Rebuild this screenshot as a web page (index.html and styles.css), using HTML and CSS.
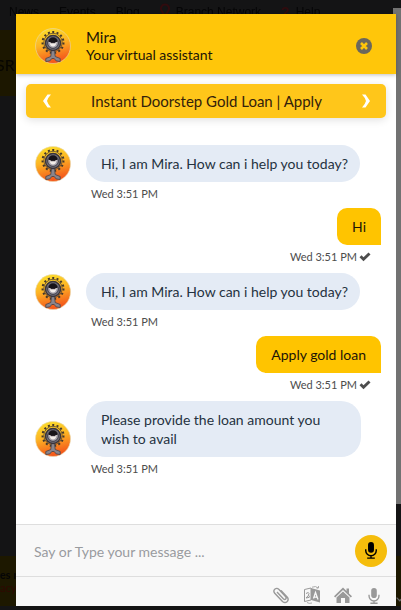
FILE: index.html
```html
<!DOCTYPE html>
<html lang="en">
<head>
<meta charset="utf-8">
<meta name="viewport" content="width=device-width, initial-scale=1">
<title>Mira</title>
<link rel="stylesheet" href="styles.css">
</head>
<body>
<svg class="defs" aria-hidden="true">
  <defs>
    <linearGradient id="sun" x1="0" y1="0" x2="0.25" y2="1">
      <stop offset="0" stop-color="#fbe42c"/><stop offset=".5" stop-color="#fdb524"/><stop offset="1" stop-color="#f45a1b"/>
    </linearGradient>
    <symbol id="mira" viewBox="0 0 36 36">
      <circle cx="18" cy="18" r="17.5" fill="url(#sun)" stroke="#e8d9b0" stroke-width=".6"/>
      <circle cx="18" cy="14.500" r="10.5" fill="none" stroke="#43372b" stroke-width="2" stroke-dasharray="2 2.400"/>
      <circle cx="18" cy="14.500" r="9.200" fill="none" stroke="#54452f" stroke-width=".8"/>
      <path d="M16.500 22h3l.7 6.500 5 2v3l-4-.6-2-2.400h-2.400l-2 2.400-4 .6v-3l5-2z" fill="#8a858c" stroke="#45414a" stroke-width=".8"/>
      <circle cx="18" cy="15" r="7.500" fill="#77757f" stroke="#38343c" stroke-width="1.500"/>
      <circle cx="18" cy="15" r="5.400" fill="#a5a1aa" stroke="#3d3b46" stroke-width="1"/>
      <path d="M13.500 14q0-4.500 4.500-4.500t4.500 4.500z" fill="#171419"/>
      <path d="M14.500 14h7q-.5 4.500-3.500 4.500t-3.500-4.500z" fill="#f2edea"/>
      <path d="M15.500 14h5v1.200h-5z" fill="#29232a"/>
    </symbol>
    <symbol id="mic" viewBox="0 0 16 20">
      <rect x="4.500" y="0" width="7" height="12.500" rx="3.500"/>
      <path d="M1.800 8.500v1.500a6.200 6.200 0 0 0 12.400 0V8.500M8 16.200v2.500M3.500 19h9" fill="none" stroke="currentColor" stroke-width="1.700"/>
    </symbol>
    <symbol id="tick" viewBox="0 0 12 10">
      <path d="M.5 5.200 2.500 3.200 4.500 5.200 9.500.5 11.500 2.500 4.500 9.300z"/>
    </symbol>
  </defs>
</svg>

<div class="site" aria-hidden="true">
  <div class="site-nav"><span>News</span><span>Events</span><span>Blog</span><span><svg class="pin" viewBox="0 0 10 14"><path d="M5 13 1.500 7.500a4 4 0 1 1 7 0z" fill="none" stroke="currentColor" stroke-width="2"/></svg>Branch Network</span><span><b>?</b> Help</span></div>
  <div class="site-banner">SR</div>
  <div class="site-main"></div>
  <div class="site-notice"><span>es n</span><em>acy</em></div>
  <div class="site-scroll"></div>
  <svg class="site-more" viewBox="0 0 8 8"><path d="m1 1 5 5 5-5" fill="none" stroke="currentColor" stroke-width="2"/></svg>
</div>

<main class="chat">
  <header class="chat-head">
    <svg class="avatar" role="img" aria-label="Mira"><use href="#mira"/></svg>
    <div class="who"><h1>Mira</h1><p>Your virtual assistant</p></div>
    <button class="close" aria-label="Close"><svg viewBox="0 0 16 16"><circle cx="8" cy="8" r="8" fill="#6b675c"/><path d="m5 5 6 6m0-6-6 6" stroke="#ffc60a" stroke-width="2.600"/></svg></button>
  </header>

  <nav class="promo" aria-label="Suggestions">
    <button aria-label="Previous"><svg viewBox="0 0 10 14"><path d="M9 .5H5.500L1 7l4.500 6.500H9Q6 10.500 5 7 6 3.500 9 .5z"/></svg></button>
    <a href="#apply">Instant Doorstep Gold Loan | Apply</a>
    <button aria-label="Next"><svg viewBox="0 0 10 14"><path d="M1 .5h3.500L9 7l-4.500 6.500H1Q4 10.500 5 7 4 3.500 1 .5z"/></svg></button>
  </nav>

  <section class="log" aria-label="Conversation">
    <article class="bot"><svg class="avatar"><use href="#mira"/></svg><p>Hi, I am Mira. How can i help you today?</p><time>Wed 3:51 PM</time></article>
    <article class="me"><p>Hi</p><time>Wed 3:51 PM<svg><use href="#tick"/></svg></time></article>
    <article class="bot"><svg class="avatar"><use href="#mira"/></svg><p>Hi, I am Mira. How can i help you today?</p><time>Wed 3:51 PM</time></article>
    <article class="me"><p>Apply gold loan</p><time>Wed 3:51 PM<svg><use href="#tick"/></svg></time></article>
    <article class="bot"><svg class="avatar"><use href="#mira"/></svg><p>Please provide the loan amount you wish to avail</p><time>Wed 3:51 PM</time></article>
  </section>

  <form class="compose">
    <input type="text" aria-label="Message" placeholder="Say or Type your message ...">
    <button type="button" class="talk" aria-label="Speak"><svg><use href="#mic"/></svg></button>
  </form>

  <footer class="tools">
    <button aria-label="Attach"><svg viewBox="0 0 18 18"><path d="m5 6 6.500 7q1.300 1 2.200 0t0-2.200L7 3.500Q5 1.500 3 3T2.500 7l8 8.500q2.500 2 4.500.2t.5-4.400L9 4.500" fill="none" stroke="currentColor" stroke-width="1.400"/></svg></button>
    <button aria-label="Language"><svg viewBox="0 0 18 18"><path d="M1.500 3.500 8 2v12l-6.500 1.500z" fill="none" stroke="currentColor"/><path d="m8 2 9 2.500v12L8 14z"/><path d="M3 7.500q3-2 3 0T3 12l3.500-.7M5 9.500l2 1" fill="none" stroke="currentColor"/><path d="m10.500 12.500 2-6 2.500 7m-3.700-2.600 3 .5" fill="none" stroke="#f8f8f8" stroke-width="1.300"/><path d="M9 1.200Q13-.5 15 2m-1.500 0h2V0M9 17q-3 1-5-.5" fill="none" stroke="currentColor" stroke-width=".8"/></svg></button>
    <button aria-label="Home"><svg viewBox="0 0 18 18"><path d="M9 1.500 12.500 5V2.500H15v5l3 2.800-1.200 1.200L9 4 1.200 11.500 0 10.300z"/><path d="m9 5.500 6.500 6V17H11v-5H7v5H2.500v-5.500z"/></svg></button>
    <button aria-label="Microphone"><svg class="small-mic"><use href="#mic"/></svg></button>
  </footer>
</main>
</body>
</html>
```

FILE: styles.css
```css
* { box-sizing: border-box; }

body {
  margin: 0;
  height: 100vh;
  display: flex;
  padding: 14px 5px 4px 16px;
  background: #141415;
  font-family: Lato, "Liberation Sans", sans-serif;
  font-size: 14px;
  line-height: 19px;
  color: #25323f;
}

h1, p { margin: 0; font-weight: 400; }

button {
  display: flex;
  padding: 0;
  border: 0;
  background: none;
  color: inherit;
  font: inherit;
  cursor: pointer;
}

svg { display: block; fill: currentColor; flex: none; }
.defs { position: absolute; width: 0; height: 0; }

/* Dimmed page behind the chat window */
.site {
  position: fixed;
  inset: 0;
  display: flex;
  flex-direction: column;
  overflow: hidden;
  color: #050506;
}
.site-nav {
  display: flex;
  gap: 20px;
  height: 30px;
  padding: 3px 0 0 9px;
  white-space: nowrap;
  font-family: "Liberation Sans", sans-serif;
  font-size: 12px;
}
.site-nav span { display: flex; gap: 6px; }
.site-nav .pin { width: 10px; height: 14px; color: #300b0e; }
.site-nav b { color: #300b0e; font-size: 14px; }
.site-banner {
  height: 66px;
  margin-left: -4px;
  padding-top: 25px;
  background: #1c1700;
  font-size: 16px;
  color: #070600;
}
.site-main { flex: 1; }
.site-notice {
  display: flex;
  flex-direction: column;
  height: 50px;
  margin-bottom: 4px;
  padding-top: 12px;
  background: #1d1800;
  font-size: 11px;
  line-height: 13px;
  font-weight: 700;
}
.site-notice em { font-style: normal; font-weight: 400; color: #300800; }
.site-scroll {
  position: absolute;
  top: 8px;
  right: 0;
  bottom: 106px;
  width: 8px;
  background: #727272;
}
.site-more {
  position: absolute;
  right: 0;
  bottom: 8px;
  width: 5px;
  height: 5px;
  color: #666;
}

.chat {
  position: relative;
  flex: 1;
  min-width: 0;
  display: flex;
  flex-direction: column;
  background: #fff;
}

.chat-head {
  display: flex;
  align-items: center;
  gap: 15px;
  height: 60px;
  flex: none;
  padding: 4px 24px 0 19px;
  background: #ffc60a;
  box-shadow: 0 1px 4px rgba(0, 0, 0, .25);
  color: #1d1407;
}
.avatar { width: 36px; height: 36px; }
.who { flex: 1; line-height: 17px; }
.who h1 { font-size: 15px; }
.close svg { width: 16px; height: 16px; }

.promo {
  display: flex;
  align-items: center;
  justify-content: space-between;
  height: 34px;
  flex: none;
  margin: 10px 10px 0;
  padding: 0 15px 0 16px;
  border-radius: 5px;
  background: #ffc61a;
  box-shadow: 0 2px 8px rgba(0, 0, 0, .12);
  color: #fff;
}
.promo a { color: #33210b; font-size: 15px; text-decoration: none; }
.promo svg { width: 10px; height: 14px; }

.log {
  flex: 1;
  display: flex;
  flex-direction: column;
  gap: 6px;
  padding: 27px 15px 0 19px;
}
.log p { padding: 9px 15px; }
.log time { font-size: 11px; line-height: 16px; color: #4d4d4d; }

.bot {
  display: grid;
  grid-template-columns: 36px auto;
  justify-content: start;
  align-items: end;
  gap: 4px 15px;
  padding-right: 20px;
}
.log .bot p { padding-right: 12px; border-radius: 20px; background: #e4ebf5; }
.bot time { grid-column: 2; padding-left: 5px; }

.me {
  display: flex;
  flex-direction: column;
  align-items: flex-end;
  gap: 4px;
  padding-bottom: 2px;
}
.me p { border-radius: 10px 10px 0 10px; background: #ffc400; color: #1d1407; }
.me time { display: flex; align-items: center; gap: 2px; padding-right: 10px; }
.me time svg { width: 12px; height: 10px; }

.compose {
  display: flex;
  align-items: center;
  height: 52px;
  flex: none;
  padding: 0 9px 0 18px;
  border-top: 1px solid #dedede;
  background: #f8f8f8;
}
.compose input {
  flex: 1;
  min-width: 0;
  padding: 2px 0 0;
  border: 0;
  outline: 0;
  background: none;
  font: inherit;
}
.compose input::placeholder { color: #999b9f; }
.talk {
  align-items: center;
  justify-content: center;
  width: 32px;
  height: 32px;
  border-radius: 50%;
  background: #f5bd0c;
  color: #000;
}
.talk svg { width: 14px; height: 17px; }

.tools {
  display: flex;
  align-items: flex-end;
  justify-content: flex-end;
  gap: 13px;
  height: 30px;
  flex: none;
  padding: 0 13px 2px 0;
  border-top: 1px solid #dedede;
  background: #f8f8f8;
  color: #999;
}
.tools svg { width: 18px; height: 18px; }
.tools .small-mic { height: 16px; }
```
